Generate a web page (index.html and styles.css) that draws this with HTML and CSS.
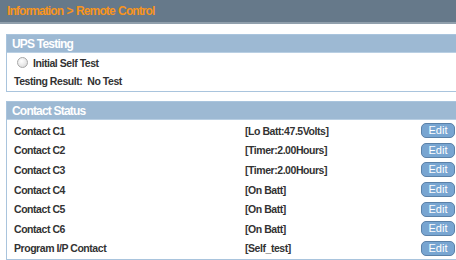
FILE: index.html
```html
<!DOCTYPE html>
<html>
<head>
<meta charset="utf-8">
<link rel="stylesheet" href="styles.css">
</head>
<body>
<div class="topbar">Information &gt; Remote Control</div>
<div class="panel">
  <div class="panel-head">UPS Testing</div>
  <div class="test-row"><span class="radio"></span><span>Initial Self Test</span></div>
  <div class="result-row">Testing Result:&nbsp; No Test</div>
</div>
<div class="panel panel-contact">
  <div class="panel-head">Contact Status</div>
  <div class="contacts">
    <div class="c-label">Contact C1</div><div class="c-val">[Lo Batt:47.5Volts]</div><button class="edit">Edit</button>
    <div class="c-label">Contact C2</div><div class="c-val">[Timer:2.00Hours]</div><button class="edit">Edit</button>
    <div class="c-label">Contact C3</div><div class="c-val">[Timer:2.00Hours]</div><button class="edit">Edit</button>
    <div class="c-label">Contact C4</div><div class="c-val">[On Batt]</div><button class="edit">Edit</button>
    <div class="c-label">Contact C5</div><div class="c-val">[On Batt]</div><button class="edit">Edit</button>
    <div class="c-label">Contact C6</div><div class="c-val">[On Batt]</div><button class="edit">Edit</button>
    <div class="c-label">Program I/P Contact</div><div class="c-val">[Self_test]</div><button class="edit">Edit</button>
  </div>
</div>
</body>
</html>
```
FILE: styles.css
```css
* { box-sizing: border-box; }
html, body { margin: 0; padding: 0; background: #fff; overflow: hidden; }
body { font-family: "Liberation Sans", Arial, sans-serif; font-size: 10.5px; font-weight: bold; color: #333; width: 456px; letter-spacing: -0.45px; }
.topbar {
  height: 24px;
  background: #66798a;
  border-bottom: 2px solid #909fac;
  color: #f7941d;
  font-size: 12px;
  letter-spacing: -0.9px;
  word-spacing: 1px;
  line-height: 22px;
  padding-left: 7px;
}
.panel {
  margin: 10px 0 0 6px;
  border: 1px solid #a9c4dd;
  border-right: none;
}
.panel-contact { margin-top: 9px; }
.panel-head {
  height: 18px;
  background: #9db9d3;
  color: #fff;
  font-size: 12px;
  letter-spacing: -0.8px;
  line-height: 18px;
  padding-left: 5px;
  border-bottom: 1px solid #b9cfe3;
}
.test-row {
  display: flex;
  align-items: center;
  gap: 5px;
  height: 19px;
  padding-left: 10px;
}
.radio {
  width: 11px; height: 11px;
  border-radius: 50%;
  border: 1px solid #a8a8a8;
  background: radial-gradient(circle at 40% 35%, #ffffff 0%, #e6e6e6 60%, #cfcfcf 100%);
}
.result-row {
  height: 19px;
  line-height: 19px;
  padding-left: 7px;
}
.contacts {
  display: grid;
  grid-template-columns: 231px 1fr auto;
  grid-auto-rows: 19.6px;
  align-items: center;
  padding: 1px 1px 1px 7px;
}
.edit {
  font-family: "Liberation Sans", Arial, sans-serif;
  font-size: 11px;
  font-weight: normal;
  letter-spacing: 0;
  color: #fff;
  background: #78a5d1;
  border: 1px solid #5b81a8;
  border-radius: 5px;
  width: 34px;
  height: 15px;
  padding: 0;
  line-height: 13px;
}
```
